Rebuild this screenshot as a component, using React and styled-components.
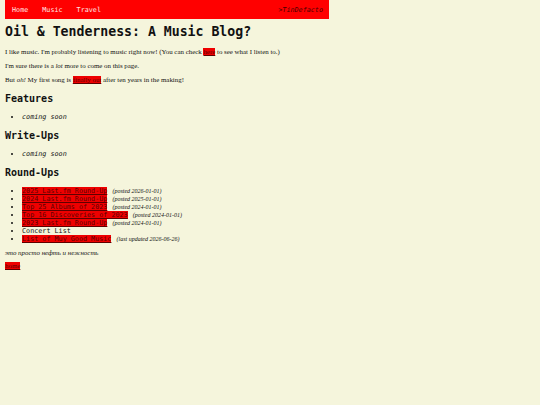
import React from 'react'
import styled, {createGlobalStyle} from 'styled-components';

const Global = createGlobalStyle`
  html, body {
    margin: 0;
    padding: 0;
    background-color: #f5f5dc;
  }
  body {
    font-family: "Liberation Serif", "Times New Roman", serif;
    color: #111;
  }
`;

const Page = styled.div`
  padding: 0 5px;
`;

const NavBar = styled.nav`
  display: flex;
  justify-content: space-between;
  align-items: center;
  width: 324px;
  height: 19px;
  background-color: #ff0000;
  font-family: "DejaVu Sans Mono", monospace;
  font-size: 6.75px;
`;

const NavLinks = styled.div`
  display: flex;
`;

const NavLink = styled.a`
  padding: 0 7px;
  color: #ffe4e4;
  text-decoration: none;
`;

const Brand = styled.a`
  padding-right: 6px;
  color: #4a0000;
  font-style: italic;
  text-decoration: none;
`;

const Title = styled.h1`
  margin: 5px 0 8px;
  font-family: "DejaVu Sans Mono", monospace;
  font-size: 13.2px;
  line-height: 16px;
  color: #111;
`;

const Para = styled.p`
  margin: 6px 0;
  font-size: 6.9px;
  line-height: 8px;
`;

const Red = styled.a`
  background-color: #ee0000;
  color: #5e0000;
  text-decoration: underline;
`;

const Section = styled.h2`
  margin: 8px 0 7.5px;
  font-family: "DejaVu Sans Mono", monospace;
  font-size: 10px;
  line-height: 13.5px;
  color: #111;
`;

const List = styled.ul`
  margin: 7.5px 0 6px;
  padding-left: 17px;
  font-family: "DejaVu Sans Mono", monospace;
  font-size: 6.75px;
  line-height: 8px;
`;

const Item = styled.li`
  font-style: ${props => props.soon ? 'italic' : 'normal'};
`;

const Note = styled.span`
  margin-left: 1px;
  font-family: "Liberation Serif", "Times New Roman", serif;
  font-style: italic;
  font-size: 6px;
`;

const Motto = styled.p`
  margin: 6px 0 5px;
  font-size: 6.9px;
  line-height: 8px;
  font-style: italic;
`;

const HomeLine = styled.p`
  margin: 5px 0;
  font-size: 6.9px;
  line-height: 8px;
`;

const roundups = [
  {name: "2025 Last.fm Round-Up", note: "(posted 2026-01-01)"},
  {name: "2024 Last.fm Round-Up", note: "(posted 2025-01-01)"},
  {name: "Top 25 Albums of 2023", note: "(posted 2024-01-01)"},
  {name: "Top 16 Discoveries of 2023", note: "(posted 2024-01-01)"},
  {name: "2023 Last.fm Round-Up", note: "(posted 2024-01-01)"},
  {name: "Concert List", plain: true},
  {name: "List of Muy Good Music", note: "(last updated 2026-06-26)"},
];

const App = () => {
  return (
    <>
      <Global />
      <Page>
        <NavBar>
          <NavLinks>
            <NavLink href="#">Home</NavLink>
            <NavLink href="#">Music</NavLink>
            <NavLink href="#">Travel</NavLink>
          </NavLinks>
          <Brand href="#">&gt;TinDefacto</Brand>
        </NavBar>

        <Title>Oil &amp; Tenderness: A Music Blog?</Title>

        <Para>I like music. I'm probably listening to music right now! (You can check <Red href="#">here</Red> to see what I listen to.)</Para>
        <Para>I'm sure there is a <i>lot</i> more to come on this page.</Para>
        <Para>But <i>oh!</i> My first song is <Red href="#">finally out</Red> after ten years in the making!</Para>

        <Section>Features</Section>
        <List>
          <Item soon>coming soon</Item>
        </List>

        <Section>Write-Ups</Section>
        <List>
          <Item soon>coming soon</Item>
        </List>

        <Section>Round-Ups</Section>
        <List>
          {roundups.map(r => (
            <Item key={r.name}>
              {r.plain ? r.name : <Red href="#">{r.name}</Red>}
              {r.note && <> <Note>{r.note}</Note></>}
            </Item>
          ))}
        </List>

        <Motto>это просто нефть и нежность</Motto>
        <HomeLine><Red href="#">home</Red></HomeLine>
      </Page>
    </>
  )
}

export default App;
